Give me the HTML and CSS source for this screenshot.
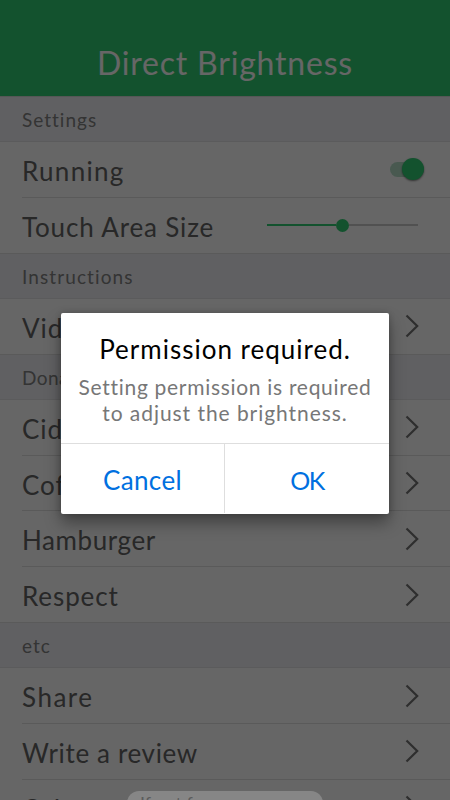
FILE: index.html
```
<!DOCTYPE html>
<html lang="en">
<head>
  <meta charset="UTF-8">
  <meta name="viewport" content="width=device-width, initial-scale=1.0">
  <title>Direct Brightness</title>
  <link rel="stylesheet" href="styles.css">
</head>
<body>
  <div class="app">
    <header class="header"><h1 class="title">Direct Brightness</h1></header>

    <div class="section">Settings</div>
    <div class="row">
      <span class="label running">Running</span>
      <span class="switch"><span class="knob"></span></span>
    </div>
    <div class="row last">
      <span class="label touch">Touch Area Size</span>
      <span class="slider"><span class="fill"></span><span class="thumb"></span><span class="track"></span></span>
    </div>

    <div class="section instructions">Instructions</div>
    <div class="row last">
      <span class="label">Video</span>
      <svg class="arrow" viewBox="0 0 14 24"><path d="M1.5 1.5 L12.2 12 L1.5 22.5"/></svg>
    </div>

    <div class="section donate">Donate</div>
    <div class="row">
      <span class="label">Cider</span>
      <svg class="arrow" viewBox="0 0 14 24"><path d="M1.5 1.5 L12.2 12 L1.5 22.5"/></svg>
    </div>
    <div class="row">
      <span class="label">Coffee</span>
      <svg class="arrow" viewBox="0 0 14 24"><path d="M1.5 1.5 L12.2 12 L1.5 22.5"/></svg>
    </div>
    <div class="row">
      <span class="label hamburger">Hamburger</span>
      <svg class="arrow" viewBox="0 0 14 24"><path d="M1.5 1.5 L12.2 12 L1.5 22.5"/></svg>
    </div>
    <div class="row last">
      <span class="label respect">Respect</span>
      <svg class="arrow" viewBox="0 0 14 24"><path d="M1.5 1.5 L12.2 12 L1.5 22.5"/></svg>
    </div>

    <div class="section">etc</div>
    <div class="row">
      <span class="label share">Share</span>
      <svg class="arrow" viewBox="0 0 14 24"><path d="M1.5 1.5 L12.2 12 L1.5 22.5"/></svg>
    </div>
    <div class="row">
      <span class="label review">Write a review</span>
      <svg class="arrow" viewBox="0 0 14 24"><path d="M1.5 1.5 L12.2 12 L1.5 22.5"/></svg>
    </div>
    <div class="row">
      <span class="label">Other</span>
      <svg class="arrow" viewBox="0 0 14 24"><path d="M1.5 1.5 L12.2 12 L1.5 22.5"/></svg>
    </div>
  </div>

  <div class="overlay">
    <div class="dialog">
      <div class="message">
        <h2 class="dialog-title">Permission required.</h2>
        <p class="dialog-text">Setting permission is required<br><span class="line2">to adjust the brightness.</span></p>
      </div>
      <div class="buttons">
        <button class="button cancel">Cancel</button>
        <button class="button ok">OK</button>
      </div>
    </div>
  </div>

  <div class="toast">If not f</div>
</body>
</html>
```

FILE: styles.css
```
* {
  box-sizing: border-box;
}
body {
  margin: 0;
  height: 800px;
  overflow: hidden;
  position: relative;
  font-family: Lato, sans-serif;
  background-color: #fff;
}
.app {
  height: 800px;
  overflow: hidden;
}
.header {
  height: 96.9px;
  padding-top: 43px;
  background-color: #30cd73;
  border-bottom: 1px solid #d4dad8;
}
.title {
  margin: 0;
  font-size: 32px;
  line-height: 40px;
  font-weight: 400;
  text-align: center;
  letter-spacing: 0.8px;
  color: #fff;
}
.section {
  height: 45.2px;
  padding: 1px 22px 0;
  font-size: 19px;
  line-height: 44px;
  letter-spacing: 1px;
  color: #828282;
  background-color: #f1f1f5;
  border-bottom: 1px solid #e4e4e6;
}
.instructions {
  letter-spacing: 1.1px;
}
.donate {
  letter-spacing: 0.4px;
}
.row {
  display: flex;
  justify-content: space-between;
  align-items: center;
  height: 55.8px;
  margin-left: 22px;
  padding-right: 31px;
  border-bottom: 1px solid #e0e0e0;
}
.row.last {
  margin-left: 0;
  padding-left: 22px;
}
.label {
  padding-top: 3px;
  font-size: 26px;
  line-height: 32px;
  letter-spacing: 1px;
  color: #646464;
}
.running {
  letter-spacing: 1.3px;
}
.touch {
  letter-spacing: 0.85px;
}
.hamburger {
  letter-spacing: 0.6px;
}
.respect {
  letter-spacing: 0.9px;
}
.share {
  letter-spacing: 1.5px;
}
.review {
  letter-spacing: 0.65px;
}
.arrow {
  width: 14px;
  height: 24px;
  fill: none;
  stroke: #747474;
  stroke-width: 2.2;
}
.switch {
  display: flex;
  justify-content: flex-end;
  align-items: center;
  width: 34px;
  height: 15px;
  margin-right: -5px;
  border-radius: 8px;
  background-color: #b6dfc9;
}
.knob {
  width: 22px;
  height: 22px;
  flex: none;
  border-radius: 50%;
  background-color: #30cd73;
  box-shadow: 0 1px 2px rgba(0, 0, 0, 0.5);
}
.slider {
  display: flex;
  align-items: center;
  width: 151px;
  margin-right: 1px;
}
.fill {
  width: 69px;
  height: 2px;
  background-color: #30cd73;
}
.thumb {
  width: 13px;
  height: 13px;
  border-radius: 50%;
  background-color: #30cd73;
}
.track {
  flex: 1;
  height: 2px;
  background-color: #cacaca;
}
.overlay {
  position: absolute;
  inset: 0;
  display: flex;
  justify-content: center;
  align-items: flex-start;
  padding-top: 313px;
  background-color: rgba(0, 0, 0, 0.6);
}
.dialog {
  width: 328px;
  height: 200.5px;
  border-radius: 2px;
  background-color: #fff;
  box-shadow: 0 9px 16px rgba(0, 0, 0, 0.36), 0 0 6px rgba(0, 0, 0, 0.2);
}
.message {
  height: 131px;
  padding-top: 20px;
  text-align: center;
  border-bottom: 1px solid #dedede;
}
.dialog-title {
  margin: 0;
  font-size: 26px;
  line-height: 32px;
  font-weight: 400;
  letter-spacing: 1px;
  color: #000;
}
.dialog-text {
  margin: 9px 0 0;
  font-size: 21px;
  line-height: 26px;
  white-space: nowrap;
  letter-spacing: 0.7px;
  color: #777;
}
.line2 {
  letter-spacing: 0.95px;
}
.buttons {
  display: flex;
  height: 69px;
}
.button {
  width: 164px;
  padding: 3px 0 0;
  border: none;
  background: none;
  font-family: inherit;
  font-size: 26px;
  color: #0070e0;
}
.cancel {
  border-right: 1px solid #dedede;
  letter-spacing: 0.4px;
}
.ok {
  font-size: 25px;
  letter-spacing: -1.5px;
}
.toast {
  position: absolute;
  left: 127px;
  top: 791px;
  width: 196px;
  height: 40px;
  padding: 1px 0 0 13px;
  border-radius: 12px;
  font-size: 18px;
  line-height: 22px;
  color: #5c5c5c;
  background-color: #868686;
}
```
